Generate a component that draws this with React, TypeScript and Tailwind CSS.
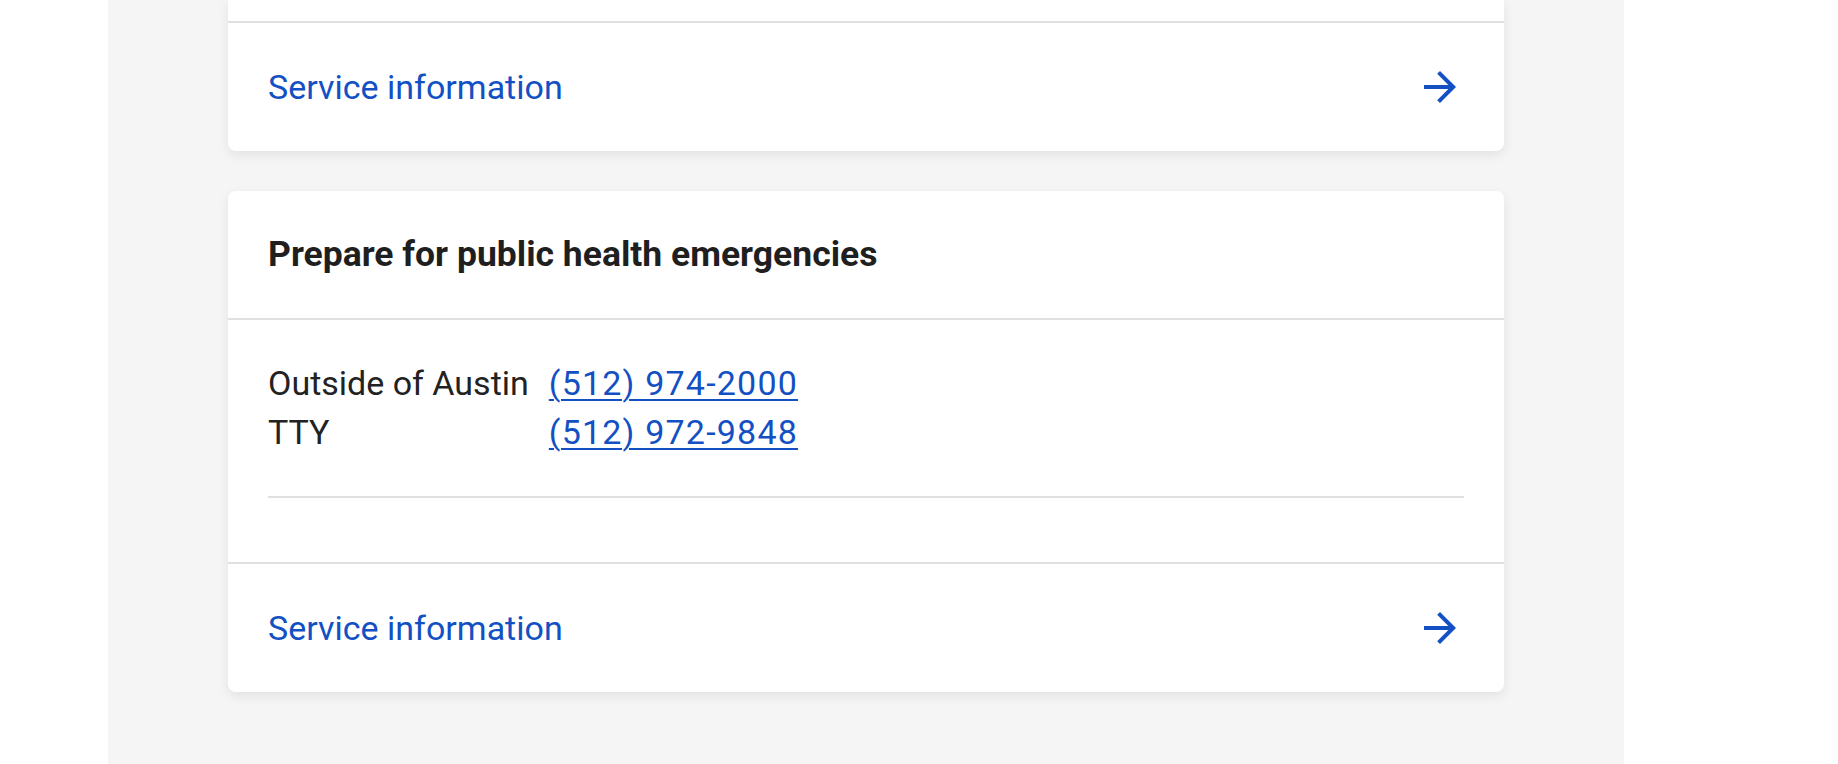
const font = { fontFamily: "Roboto, 'Noto Sans', sans-serif" };

function ArrowRight() {
  return (
    <svg viewBox="0 0 24 24" className="w-[48px] h-[48px] shrink-0" fill="#1350c3" aria-hidden>
      <path d="M12 4l-1.41 1.41L16.17 11H4v2h12.17l-5.58 5.59L12 20l8-8z" />
    </svg>
  )
}

function ServiceLink() {
  return (
    <a
      href="#"
      className="h-[128px] px-[40px] flex items-center justify-between text-[#1350c3] text-[34px] leading-none"
    >
      <span>Service information</span>
      <ArrowRight />
    </a>
  )
}

export default function App() {
  return (
    <div className="w-full h-[764px] bg-white overflow-hidden flex" style={font}>
      <main className="ml-[108px] w-[1516px] h-full bg-[#f5f5f5] px-[120px]">
        <div className="flex flex-col gap-[40px]">
          {/* Card cut off by the top edge */}
          <section className="bg-white rounded-b-lg shadow-[0_4px_12px_rgba(0,0,0,0.08)]">
            <div className="h-[23px] border-b-2 border-[#e0e0e0]" />
            <ServiceLink />
          </section>

          {/* Emergencies card */}
          <section className="bg-white rounded-lg shadow-[0_4px_12px_rgba(0,0,0,0.08)]">
            <div className="h-[129px] px-[40px] flex items-center border-b-2 border-[#e0e0e0]">
              <h2 className="text-[35.5px] font-bold text-[#1f1f1f]">
                Prepare for public health emergencies
              </h2>
            </div>
            <div className="px-[40px] pt-[39px] pb-[64px] border-b-2 border-[#e0e0e0]">
              <table className="text-[34px] leading-[49px] text-[#222]">
                <tbody>
                  <tr>
                    <td className="pr-[20px]">Outside of Austin</td>
                    <td>
                      <a href="#" className="text-[#1350c3] tracking-[1.2px] underline decoration-2 underline-offset-4">
                        (512) 974-2000
                      </a>
                    </td>
                  </tr>
                  <tr>
                    <td className="pr-[20px]">TTY</td>
                    <td>
                      <a href="#" className="text-[#1350c3] tracking-[1.2px] underline decoration-2 underline-offset-4">
                        (512) 972-9848
                      </a>
                    </td>
                  </tr>
                </tbody>
              </table>
              <div className="mt-[39px] border-b-2 border-[#e0e0e0]" />
            </div>
            <ServiceLink />
          </section>
        </div>
      </main>
    </div>
  )
}
